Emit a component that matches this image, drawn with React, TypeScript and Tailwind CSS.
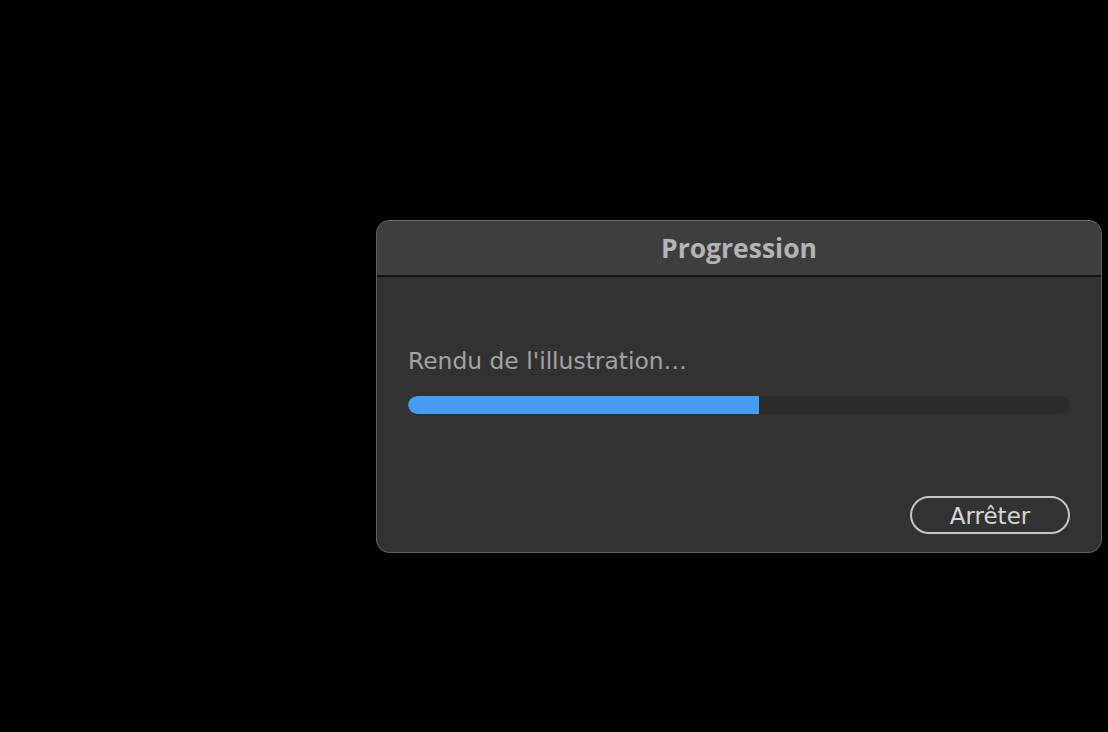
import React from "react";

export default function App() {
  return (
    <div className="w-[1108px] h-[732px] bg-black relative overflow-hidden" style={{ fontFamily: '"DejaVu Sans", "Liberation Sans", sans-serif' }}>
      <div className="absolute left-[376px] top-[220px] w-[726px] h-[333px] rounded-[14px] border border-[#5f5f5f] border-t-[#707070] bg-[#323232] overflow-hidden flex flex-col">
        <div className="h-[56px] bg-[#3d3e3e] border-b-2 border-[#121212] flex items-center justify-center shrink-0">
          <span className="text-[26.5px] font-bold text-[#b4b4b4] leading-none" style={{ fontFamily: '"Open Sans", sans-serif' }}>Progression</span>
        </div>
        <div className="flex-1 flex flex-col px-[31px]">
          <div className="mt-[73px] text-[23.4px] leading-none text-[#a3a3a3]">Rendu de l'illustration…</div>
          <div className="mt-[23px] h-[18px] w-[661px] rounded-full bg-[#2b2b2b] overflow-hidden flex">
            <div className="h-full w-[351px] bg-[#459cf0] rounded-l-full" />
          </div>
          <div className="flex justify-end mt-[82px]">
            <div className="w-[160px] h-[38px] rounded-full border-2 border-[#c6c6c6] flex items-center justify-center text-[23px] text-[#d6d6d6] leading-none">
              <span className="mt-[3px]">Arrêter</span>
            </div>
          </div>
        </div>
      </div>
    </div>
  );
}
